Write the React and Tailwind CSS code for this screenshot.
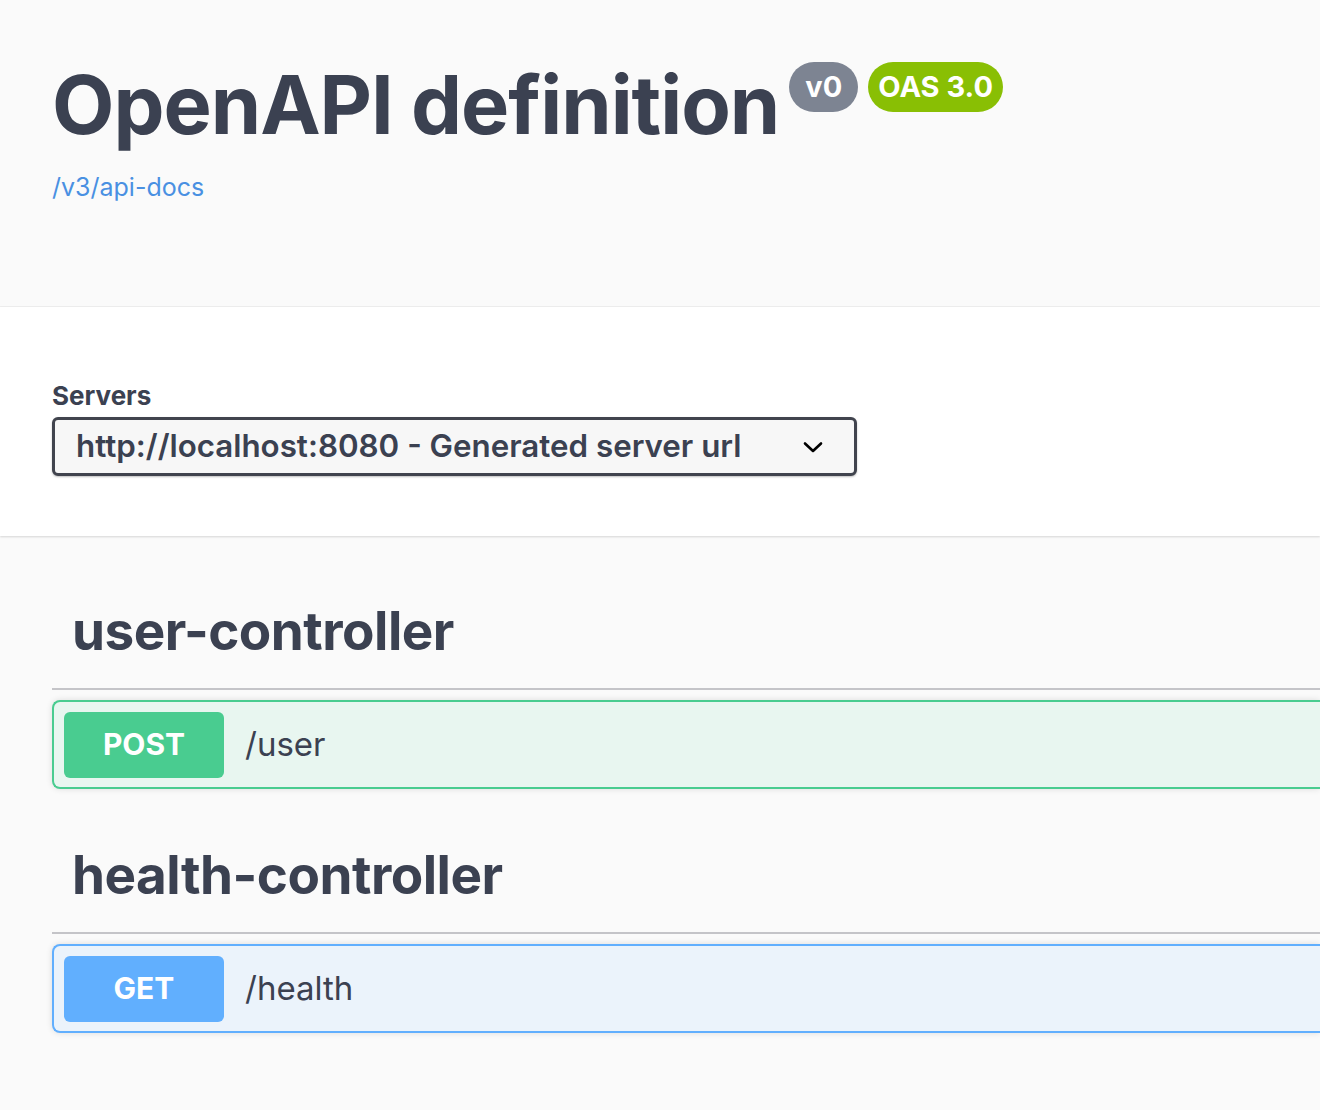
import { useState } from 'react'

const font = { fontFamily: 'Inter, "Noto Sans", sans-serif' }

function Chevron() {
  return (
    <svg width="22" height="14" viewBox="0 0 22 14" className="shrink-0">
      <path d="M3 3.5l8 7.5 8-7.5" fill="none" stroke="#000" strokeWidth="2.6" strokeLinecap="round" strokeLinejoin="round" />
    </svg>
  )
}

function Operation({ method, path, color, bg }) {
  return (
    <div
      className="flex items-center h-[89px] border-2 rounded-l-[8px] border-r-0 pl-[10px] shadow-[0_0_6px_rgba(0,0,0,0.12)]"
      style={{ borderColor: color, backgroundColor: bg }}
    >
      <span
        className="w-[160px] h-[66px] rounded-[6px] flex items-center justify-center text-white font-bold text-[30px]"
        style={{ backgroundColor: color }}
      >
        {method}
      </span>
      <span className="ml-[21px] text-[33px] text-[#3b4151]">{path}</span>
    </div>
  )
}

function Tag({ name, children }) {
  return (
    <section>
      <div className="border-b-2 border-[#c4c4c8] h-[145px] flex items-end">
        <h3 className="pl-[20px] pb-[30px] text-[53px] font-bold text-[#3b4151] leading-none tracking-[-0.5px]">
          {name}
        </h3>
      </div>
      <div className="mt-[10px]">{children}</div>
    </section>
  )
}

export default function App() {
  const [server] = useState('http://localhost:8080 - Generated server url')

  return (
    <div className="min-h-screen bg-[#fafafa] overflow-hidden" style={font}>
      {/* header */}
      <header className="h-[307px] border-b border-[#eeeeee] pl-[52px] pt-[62px]">
        <div className="flex items-start">
          <h1 className="text-[81px] font-bold leading-none text-[#3b4151] tracking-[-1px] mt-[3px]">
            OpenAPI definition
          </h1>
          <span className="ml-[10px] h-[50px] px-[16px] rounded-full bg-[#7d8492] text-white font-bold text-[29px] flex items-center">
            v0
          </span>
          <span className="ml-[10px] h-[50px] px-[10px] rounded-full bg-[#89bf04] text-white font-bold text-[29px] flex items-center">
            OAS 3.0
          </span>
        </div>
        <a className="block mt-[23px] text-[25px] text-[#4990e2]">/v3/api-docs</a>
      </header>

      {/* servers */}
      <div className="bg-white h-[229px] shadow-[0_1px_2px_rgba(0,0,0,0.15)] pl-[52px] pt-[76px]">
        <div className="text-[26px] font-bold text-[#3b4151] leading-none">Servers</div>
        <div className="mt-[8px] w-[805px] h-[59px] border-[3px] border-[#41444e] rounded-[6px] bg-[#f7f7f7] shadow-[0_1px_2px_rgba(0,0,0,0.25)] flex items-center justify-between pl-[21px] pr-[30px]">
          <span className="text-[31.3px] font-semibold text-[#3b4151]">{server}</span>
          <Chevron />
        </div>
      </div>

      {/* tags */}
      <main className="pl-[52px] pt-[9px]">
        <Tag name="user-controller">
          <Operation method="POST" path="/user" color="#49cc90" bg="#e8f6f0" />
        </Tag>
        <Tag name="health-controller">
          <Operation method="GET" path="/health" color="#61affe" bg="#ebf3fb" />
        </Tag>
      </main>
    </div>
  )
}
